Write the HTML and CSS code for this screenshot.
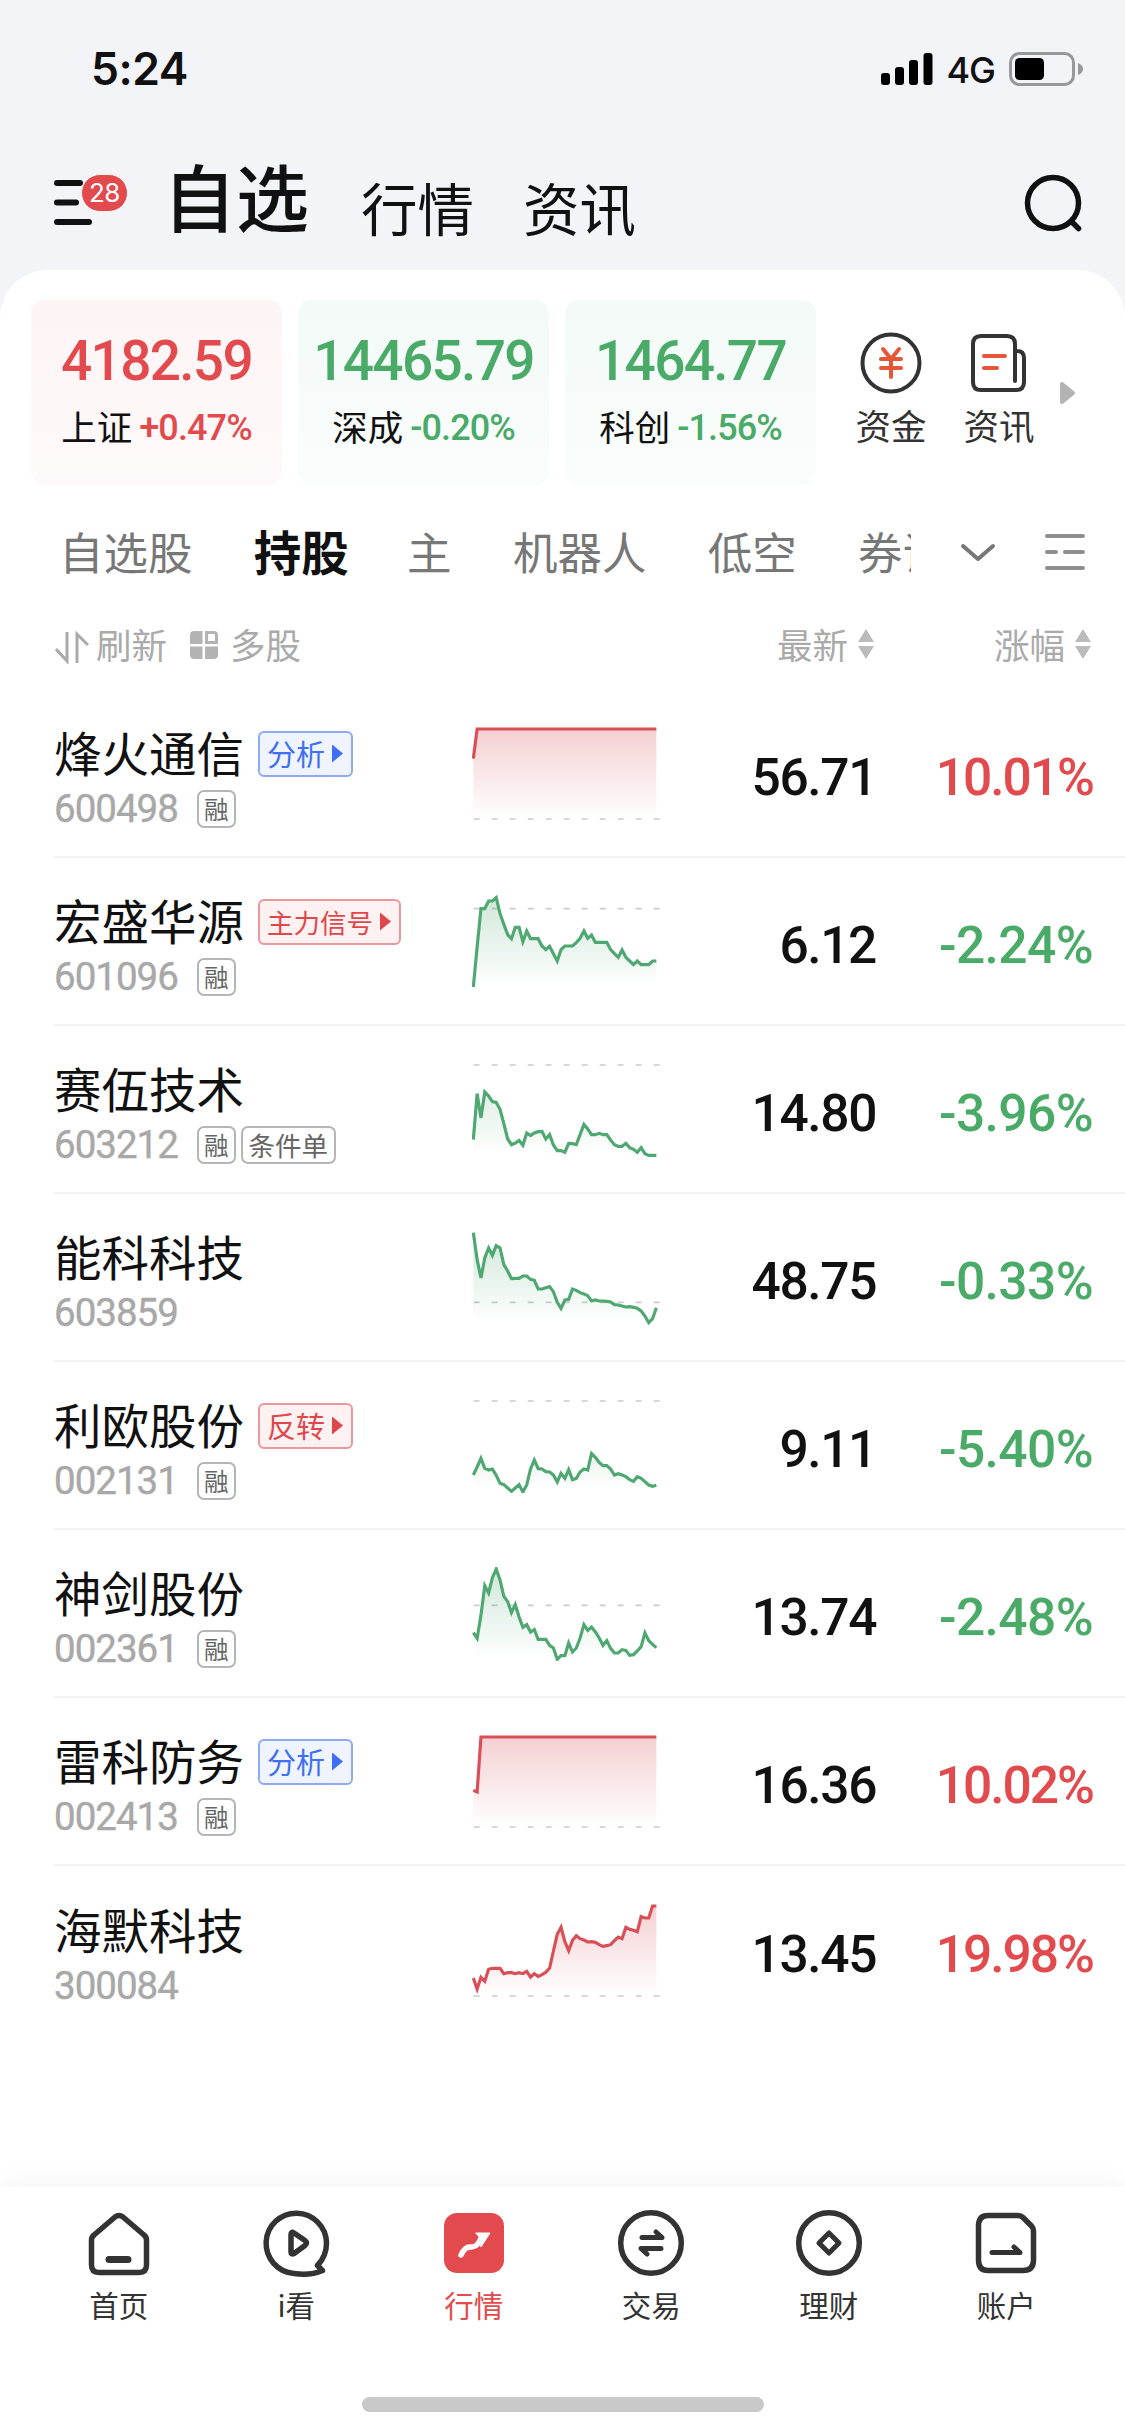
FILE: index.html
```html
<!DOCTYPE html>
<html lang="zh-CN">
<head>
<meta charset="utf-8">
<title>自选</title>
<link rel="stylesheet" href="styles.css">
</head>
<body>
<header class="status">
  <span class="clock">5:24</span>
  <div class="status-right">
    <svg width="52" height="32" viewBox="0 0 52 32"><rect x="0" y="20" width="9" height="12" rx="3"/><rect x="14" y="14" width="9" height="18" rx="3"/><rect x="28" y="7" width="9" height="25" rx="3"/><rect x="42.500" y="0" width="9" height="32" rx="3"/></svg>
    <span class="net">4G</span>
    <svg width="74" height="34" viewBox="0 0 74 34"><rect x="1.500" y="1.500" width="63" height="31" rx="9" fill="none" stroke="#97989b" stroke-width="3"/><rect x="6" y="6" width="29" height="22" rx="4.500"/><path d="M69 11q5 2 5 6t-5 6z" fill="#97989b"/></svg>
  </div>
</header>
<nav class="top">
  <div class="menu">
    <svg width="40" height="46" viewBox="0 0 40 46"><path d="M3 3H26M3 22.500H22M3 42H35" stroke="#111" stroke-width="6" stroke-linecap="round"/></svg>
    <span class="badge">28</span>
  </div>
  <span class="t-main">自选</span><span class="t-sub">行情</span><span class="t-sub t-news">资讯</span>
  <svg class="search" width="58" height="60" viewBox="0 0 58 60" fill="none" stroke="#111" stroke-width="5.500" stroke-linecap="round"><circle cx="29" cy="29" r="25.500"/><path d="M47.500 47.500L54.500 54.500"/></svg>
</nav>
<main class="panel">
  <section class="indices">
    <div class="card red"><b>4182.59</b><p>上证<i>+0.47%</i></p></div>
    <div class="card green"><b>14465.79</b><p>深成<i>-0.20%</i></p></div>
    <div class="card green"><b>1464.77</b><p>科创<i>-1.56%</i></p></div>
    <div class="quick first">
      <svg width="62" height="62" viewBox="0 0 62 62" fill="none" stroke-width="4" stroke-linecap="round" stroke-linejoin="round"><circle cx="31" cy="31" r="28.500" stroke="#333"/><path d="M23 17L31 27L39 17M21 27H41M21 36H41M31 27V45" stroke="#e45738"/></svg>
      <span>资金</span>
    </div>
    <div class="quick">
      <svg width="62" height="62" viewBox="0 0 62 62" fill="none" stroke-width="4" stroke-linecap="round" stroke-linejoin="round"><path d="M47 49V12Q47 4 39 4H13Q5 4 5 12V50Q5 58 13 58H48Q56 58 56 50V26Q56 19 49 19H47" stroke="#333"/><path d="M16 24H37M16 36H29" stroke="#e45738"/></svg>
      <span>资讯</span>
    </div>
    <svg class="more" width="17" height="24" viewBox="0 0 17 24"><path d="M3 3L14 12L3 21Z" fill="#b3b3b3" stroke="#b3b3b3" stroke-width="4" stroke-linejoin="round"/></svg>
  </section>
  <section class="tabs">
    <div class="tab-list"><span>自选股</span><span class="on">持股</span><span>主</span><span>机器人</span><span>低空</span><span>券证</span></div>
    <svg width="36" height="20" viewBox="0 0 36 20"><path d="M3 3L18 16L33 3" fill="none" stroke="#777" stroke-width="4" stroke-linecap="round" stroke-linejoin="round"/></svg>
    <svg class="list-ico" width="42" height="38" viewBox="0 0 42 38"><path d="M3 3H39M3 19H12M21 19H39M3 35H39" stroke="#8f8f8f" stroke-width="4" stroke-linecap="round"/></svg>
  </section>
  <section class="tools">
    <svg class="arrows" width="34" height="34" viewBox="0 0 34 34" fill="none" stroke="#aaa" stroke-width="3"><path d="M1 19L12 31V2M22 33V4L33 15"/></svg>
    <span class="refresh">刷新</span>
    <svg width="28" height="28" viewBox="0 0 28 28" fill="#b3b3b3"><path d="M4 0H12.500V13H0V4Q0 0 4 0ZM0 15.500H12.500V28H4Q0 28 0 24ZM15 15.500H28V24Q28 28 24 28H15Z"/><path d="M16.500 1.500H24Q26.500 1.500 26.500 4V11.500H16.500Z" fill="none" stroke="#b3b3b3" stroke-width="3"/></svg>
    <span class="multi">多股</span>
    <span class="sort latest">最新<svg width="16" height="30" viewBox="0 0 16 30"><path d="M8 0L16 13H0ZM0 17H16L8 30Z" fill="#bbb"/></svg></span>
    <span class="sort change">涨幅<svg width="16" height="30" viewBox="0 0 16 30"><path d="M8 0L16 13H0ZM0 17H16L8 30Z" fill="#bbb"/></svg></span>
  </section>
  <section class="stocks">
    <article class="row up"><div class="info"><h3>烽火通信<a class="tag blue">分析</a></h3><p><code>600498</code><em>融</em></p></div><svg class="spark"></svg><strong>56.71</strong><span class="pct">10.01%</span></article>
    <article class="row down"><div class="info"><h3>宏盛华源<a class="tag long">主力信号</a></h3><p><code>601096</code><em>融</em></p></div><svg class="spark"></svg><strong>6.12</strong><span class="pct">-2.24%</span></article>
    <article class="row down"><div class="info"><h3>赛伍技术</h3><p><code>603212</code><em>融</em><em class="wide">条件单</em></p></div><svg class="spark"></svg><strong>14.80</strong><span class="pct">-3.96%</span></article>
    <article class="row down"><div class="info"><h3>能科科技</h3><p><code>603859</code></p></div><svg class="spark"></svg><strong>48.75</strong><span class="pct">-0.33%</span></article>
    <article class="row down"><div class="info"><h3>利欧股份<a class="tag">反转</a></h3><p><code>002131</code><em>融</em></p></div><svg class="spark"></svg><strong>9.11</strong><span class="pct">-5.40%</span></article>
    <article class="row down"><div class="info"><h3>神剑股份</h3><p><code>002361</code><em>融</em></p></div><svg class="spark"></svg><strong>13.74</strong><span class="pct">-2.48%</span></article>
    <article class="row up"><div class="info"><h3>雷科防务<a class="tag blue">分析</a></h3><p><code>002413</code><em>融</em></p></div><svg class="spark"></svg><strong>16.36</strong><span class="pct">10.02%</span></article>
    <article class="row up"><div class="info"><h3>海默科技</h3><p><code>300084</code></p></div><svg class="spark"></svg><strong>13.45</strong><span class="pct">19.98%</span></article>
  </section>
</main>
<footer class="dock">
  <div class="dock-items">
    <div class="item"><svg viewBox="0 0 72 72"><path d="M32 10Q36 7 40 10L61 28Q63.500 30 63.500 33V58Q63.500 65.500 56 65.500H16Q8.500 65.500 8.500 58V33Q8.500 30 11 28Z"/><path d="M26 52.500H45" stroke-width="7"/></svg><span>首页</span></div>
    <div class="item"><svg viewBox="0 0 72 72"><path d="M57.500 58.500Q66.500 49 66.500 36A30.200 30.200 0 1 0 34 66.500Q50 69 62.500 63.500Z"/><path d="M31 27.500Q31 24 34 26L45 33.500Q48 36 45 38.500L34 46.500Q31 48 31 45Z" stroke-width="5.500"/></svg><span>i看</span></div>
    <div class="item active"><svg viewBox="0 0 72 72"><rect x="6" y="6" width="60" height="60" rx="13" fill="#e34a4d" stroke="none"/><path d="M23 48Q27 39 33 40Q40 40 43 31" stroke="#fff"/><path d="M38 26H52L43 40L42 31Z" fill="#fff" stroke="#fff" stroke-width="1"/></svg><span>行情</span></div>
    <div class="item"><svg viewBox="0 0 72 72"><circle cx="36" cy="36" r="30.300"/><path d="M27 30.500H47L41 25M46 41.500H26L32 47" stroke-width="5"/></svg><span>交易</span></div>
    <div class="item"><svg viewBox="0 0 72 72"><circle cx="36" cy="36" r="30.300"/><path d="M36 26L46 36L36 46L26 36Z" stroke-width="5"/></svg><span>理财</span></div>
    <div class="item"><svg viewBox="0 0 72 72"><path d="M18 8.500H48Q51 8.500 53 10.500L61.500 19Q63.500 21 63.500 24V53Q63.500 63.500 53 63.500H18Q8.500 63.500 8.500 53V19Q8.500 8.500 18 8.500Z"/><path d="M22 45.500H50L44 40" stroke-width="5"/></svg><span>账户</span></div>
  </div>
  <div class="home-bar"></div>
</footer>
<script src="charts.js"></script>
</body>
</html>
```
FILE: charts.js
```js
// One entry per row: top of the plot, previous close and minute prices on the same inverted scale.
const flat = (start, level) => start.concat(Array(49 - start.length).fill(level));
const series = [
  { top: 87, close: 357, y: flat([176], 87) },
  { top: 590, close: 625, y: [860,740,625,625,602,602,592,640,672,703,715,681,681,724,692,715,715,715,737,748,738,760,782,748,737,737,737,727,714,692,714,704,726,726,726,726,748,760,771,749,771,782,793,782,793,793,793,782,782] },
  { top: 104, close: 104, y: [328,190,262,185,197,214,216,237,280,326,343,338,330,345,308,316,308,304,303,326,313,344,361,361,366,339,340,343,313,282,296,313,313,309,313,313,329,343,348,348,339,352,357,366,352,370,375,375,375] },
  { top: 610, close: 818, y: [609,690,745,685,655,677,648,655,705,724,747,746,746,739,739,749,752,778,778,774,771,786,818,836,811,809,778,782,789,793,798,814,811,814,814,815,817,825,826,829,832,831,833,836,844,859,879,867,834] },
  { top: 92, close: 92, y: [314,290,264,294,299,296,315,339,343,353,363,353,343,365,344,296,269,295,296,304,305,314,335,309,324,298,328,324,305,296,299,250,261,276,286,286,296,314,310,314,319,328,333,319,324,334,344,348,345] },
  { top: 596, close: 705, y: [787,804,735,646,668,622,596,629,678,694,727,703,740,771,763,785,778,807,807,807,825,833,867,856,856,818,845,833,803,763,780,770,785,803,825,811,834,848,848,838,840,855,853,842,829,788,811,822,832] },
  { top: 111, close: 381, y: flat([271, 276], 111) },
  { top: 615, close: 885, y: [831,864,829,841,805,802,802,802,818,815,815,818,815,818,811,828,818,826,821,814,801,750,700,679,722,749,718,704,713,717,723,722,724,731,736,734,731,719,708,713,679,685,688,692,647,651,651,615,615] }
];
document.querySelectorAll('.spark').forEach((svg, n) => {
  const s = series[n];
  const color = svg.parentNode.classList.contains('up') ? '#d94f57' : '#4fa771';
  const line = s.y.map((v, i) => (4 + i * 11.44).toFixed(1) + ',' + (v - s.top)).join(' ');
  const ref = s.close - s.top;
  svg.setAttribute('viewBox', '0 -6 564 282');
  svg.innerHTML =
    `<defs><linearGradient id="g${n}" gradientUnits="userSpaceOnUse" x1="0" y1="0" x2="0" y2="270">` +
    `<stop offset="0" stop-color="${color}" stop-opacity=".27"/><stop offset="1" stop-color="${color}" stop-opacity="0"/></linearGradient></defs>` +
    `<path d="M5 ${ref}H563" stroke="#ccc" stroke-width="5" stroke-dasharray="18 36" fill="none"/>` +
    `<polygon points="4,270 ${line} 553,270" fill="url(#g${n})"/>` +
    `<polyline points="${line}" fill="none" stroke="${color}" stroke-width="9.500"/>`;
});
```
FILE: styles.css
```css
* { box-sizing: border-box; margin: 0; padding: 0; }
body {
  width: 1125px; height: 2436px; overflow: hidden;
  display: flex; flex-direction: column;
  background: #f3f4f8; color: #111;
  font-family: "Noto Sans CJK SC", sans-serif;
}
svg { display: block; flex: none; }
i, em { font-style: normal; }

.status { height: 138px; padding: 0 42px 0 91px; display: flex; align-items: center; justify-content: space-between; }
.clock { font: 600 44.5px/1 Inter, sans-serif; letter-spacing: -0.5px; }
.status-right { display: flex; align-items: center; }
.net { font: 500 36px/1 Inter, sans-serif; letter-spacing: -1px; margin: 2px 14px 0 13px; }

.top { height: 132px; display: flex; align-items: center; padding: 0 43px 0 54px; }
.menu { position: relative; width: 109px; height: 46px; margin-top: -3px; }
.badge {
  position: absolute; left: 27px; top: -6px; width: 47px; height: 38px;
  border-radius: 19px; background: #e34a4d; color: #fff; border: 1px solid #f3f4f8;
  font: 400 26px/36px Inter, sans-serif; text-align: center; letter-spacing: -0.5px;
}
.t-main { font-size: 73px; font-weight: 500; line-height: 100px; margin-top: -21px; width: 198px; }
.t-sub { font-size: 56.5px; line-height: 80px; margin-top: 3px; width: 113px; }
.t-news { margin-left: 49px; }
.search { margin-left: auto; }

.panel { flex: 1; background: #fff; border-radius: 48px 48px 0 0; padding-top: 30px; }
.indices { display: flex; height: 185px; padding-left: 31px; gap: 16px; }
.card { width: 251px; border-radius: 14px; display: flex; flex-direction: column; align-items: center; white-space: nowrap; }
.card b { font: 500 55px/64px Roboto, sans-serif; margin-top: 29px; letter-spacing: -1.7px; }
.card p { font-size: 35.5px; line-height: 50px; display: flex; align-items: center; margin-top: 5px; }
.card i { font: 500 36px/50px Roboto, sans-serif; margin: 5px 0 0 7px; letter-spacing: -0.9px; }
.card.red { background: linear-gradient(#fdf4f5, #fef9fa); }
.card.green { background: linear-gradient(#f3faf7, #fafdfc); }
.red b, .red i { color: #e34a4d; }
.green b, .green i { color: #4aaa67; }
.quick { width: 70px; padding-top: 32px; display: flex; flex-direction: column; align-items: center; color: #333; }
.quick.first { margin-left: 24px; margin-right: 22px; }
.quick span { font-size: 35.5px; line-height: 50px; margin-top: 6px; white-space: nowrap; }
.more { margin: 81px 0 0 9px; }

.tabs { height: 135px; display: flex; align-items: center; padding-left: 59px; color: #777; }
.tab-list { width: 852px; display: flex; gap: 61.3px; overflow: hidden; align-items: center; font-size: 44.5px; line-height: 66px; white-space: nowrap; margin: -4px 49px 0 0; }
.tab-list .on { font-size: 47.5px; font-weight: 700; color: #111; margin-right: -3px; }
.tab-list span { flex: none; }
.list-ico { margin: -2px 0 0 48px; }

.tools { height: 50px; display: flex; align-items: center; padding-left: 55px; color: #aaa; font-size: 35.5px; line-height: 50px; }
.tools span { margin-top: -3px; }
.tools .arrows { margin-top: 4px; }
.tools .refresh { margin: -3px 23px 0 7px; }
.tools .multi { margin-left: 12px; }
.sort { display: flex; align-items: center; gap: 10px; }
.tools .latest { margin-left: auto; }
.tools .change { margin: -3px 34px 0 120px; }

.stocks { padding-top: 20px; }
.row { height: 168px; margin-left: 54px; border-bottom: 2px solid #f3f3f3; display: flex; align-items: center; }
.row:last-child { border-bottom: 0; }
.info { width: 418px; height: 168px; padding-top: 33px; }
.info h3 { font-size: 47.5px; font-weight: 400; line-height: 60px; display: flex; align-items: center; }
.tag {
  height: 46px; margin: 3px 0 0 14px; padding: 0 8px 0 7px; border: 2px solid #e9999d; border-radius: 6px;
  background: #fdf1f1; color: #e0474b; font-size: 29px; line-height: 41px; display: flex; align-items: center; gap: 7px;
}
.tag::after { content: ""; width: 11px; height: 18px; background: currentColor; clip-path: polygon(0 0, 100% 50%, 0 100%); }
.tag.blue { background: #eff4fe; border-color: #8eaaf2; color: #3f6ff5; }
.tag.long { font-size: 26.5px; }
.info p { display: flex; align-items: center; height: 38px; margin-top: 8px; gap: 5px; }
.info code { font: 400 38.5px/38px Roboto, sans-serif; letter-spacing: -1px; color: #a8a8a8; margin-right: 16px; width: 122px; -webkit-text-stroke: 0.4px #a8a8a8; }
.info em { height: 38px; border: 2px solid #b5b5b5; border-radius: 7px; padding: 0 5px; font-size: 24.5px; line-height: 33px; color: #666; }
.info em.wide { font-size: 26.5px; padding: 0 6px; }
.spark { width: 188px; height: 94px; margin-top: 2px; }
.row strong { font: 500 51.5px/60px Roboto, sans-serif; width: 216px; text-align: right; letter-spacing: -1.4px; margin-top: 9px; }
.pct { font: 500 51.5px/60px Roboto, sans-serif; width: 217px; text-align: right; letter-spacing: -2px; margin-top: 9px; }
.up .pct { color: #e34a4d; }
.down .pct { color: #4aaa67; letter-spacing: -0.6px; }

.dock { height: 249px; background: #fff; box-shadow: 0 -8px 22px rgba(0,0,0,.035); position: relative; }
.dock-items { display: flex; padding: 20px 30px 0; }
.item { width: 177.5px; display: flex; flex-direction: column; align-items: center; font-size: 29.5px; line-height: 42px; color: #333; }
.item svg { width: 72px; height: 72px; fill: none; stroke: #333; stroke-width: 5.5; stroke-linecap: round; stroke-linejoin: round; }
.item span { margin-top: 4px; }
.item.active { color: #e34a4d; }
.home-bar { width: 402px; height: 15px; margin: 72px auto 0; border-radius: 8px; background: #c9c9c9; }
```
